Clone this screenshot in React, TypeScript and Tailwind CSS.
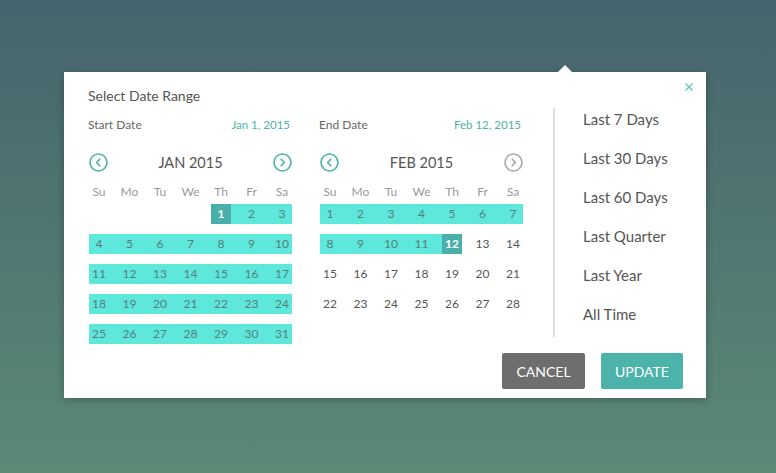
import React from 'react';

type Band = 'none' | 'in' | 'start' | 'end';

const BAND = 'bg-[#5ee8dc]';

function NavArrow({ dir, active }: { dir: 'left' | 'right'; active: boolean }) {
  const color = active ? '#4bb3aa' : '#a8a8a8';
  return (
    <svg width="19" height="19" viewBox="0 0 19 19" fill="none">
      <circle cx="9.5" cy="9.5" r="8.5" stroke={color} strokeWidth="1.6" />
      {dir === 'left' ? (
        <path d="M10.8 6.2 L7.6 9.5 L10.8 12.8" stroke={color} strokeWidth="1.6" strokeLinecap="round" strokeLinejoin="round" />
      ) : (
        <path d="M8.2 6.2 L11.4 9.5 L8.2 12.8" stroke={color} strokeWidth="1.6" strokeLinecap="round" strokeLinejoin="round" />
      )}
    </svg>
  );
}

function Calendar({
  label,
  value,
  month,
  offset,
  days,
  rangeFrom,
  rangeTo,
  edge,
  nextActive,
}: {
  label: string;
  value: string;
  month: string;
  offset: number;
  days: number;
  rangeFrom: number;
  rangeTo: number;
  edge: number;
  nextActive: boolean;
}) {
  const cells: (number | null)[] = [];
  for (let i = 0; i < offset; i++) cells.push(null);
  for (let d = 1; d <= days; d++) cells.push(d);
  while (cells.length % 7) cells.push(null);
  const weeks: (number | null)[][] = [];
  for (let i = 0; i < cells.length; i += 7) weeks.push(cells.slice(i, i + 7));

  const inBand = (d: number | null) => d !== null && d >= rangeFrom && d <= rangeTo;
  const bandOf = (d: number | null): Band => {
    if (!inBand(d)) return 'none';
    if (d === edge) return rangeFrom === edge ? 'start' : 'end';
    return 'in';
  };

  return (
    <div className="w-[203px]">
      <div className="flex items-center justify-between pr-[2px] leading-[14px]">
        <span className="-ml-px text-[12px] text-[#666]">{label}</span>
        <span className="text-[11.5px] text-[#4bb3aa]">{value}</span>
      </div>

      <div className="mt-[21px] flex items-center justify-between">
        <NavArrow dir="left" active />
        <span className="text-[14.5px] leading-[18px] text-[#555]">{month}</span>
        <NavArrow dir="right" active={nextActive} />
      </div>

      <div className="mt-[13px] flex text-[12px] leading-[14px] text-[#9a9a9a]">
        {['Su', 'Mo', 'Tu', 'We', 'Th', 'Fr', 'Sa'].map((w, i) => (
          <React.Fragment key={w}>
            {i > 0 && <div className="flex-1" />}
            <div className="w-5 text-center">{w}</div>
          </React.Fragment>
        ))}
      </div>

      <div className="mt-[5px] flex flex-col gap-[10px]">
        {weeks.map((week, wi) => (
          <div key={wi} className="flex h-5 text-[12px]">
            {week.map((d, i) => {
              const b = bandOf(d);
              const prev = i > 0 ? week[i - 1] : null;
              const gapOn = i > 0 && inBand(prev) && inBand(d);
              return (
                <React.Fragment key={i}>
                  {i > 0 && <div className={`flex-1 ${gapOn ? BAND : ''}`} />}
                  <div
                    className={`flex h-5 w-5 items-center justify-center ${
                      b === 'start' || b === 'end'
                        ? 'bg-[#48b0a8] font-bold text-white'
                        : b === 'in'
                        ? `${BAND} text-[#587d79]`
                        : 'text-[#555]'
                    }`}
                  >
                    {d}
                  </div>
                </React.Fragment>
              );
            })}
          </div>
        ))}
      </div>
    </div>
  );
}

export default function App() {
  const presets = ['Last 7 Days', 'Last 30 Days', 'Last 60 Days', 'Last Quarter', 'Last Year', 'All Time'];

  return (
    <div
      className="h-[473px] w-[776px] bg-[linear-gradient(to_bottom,#46646d,#5b8a77)] pl-16 pt-[72px]"
      style={{ fontFamily: 'Lato, "Open Sans", sans-serif' }}
    >
      <div className="relative flex h-[326px] w-[642px] flex-col bg-white shadow-[0_2px_8px_rgba(0,0,0,0.25)]">
        {/* caret */}
        <div className="absolute -top-[7px] left-[494px] h-0 w-0 border-x-[7px] border-b-[7px] border-x-transparent border-b-white" />
        {/* close */}
        <button className="absolute right-[12px] top-[10px] text-[#4bb3aa]">
          <svg width="10" height="10" viewBox="0 0 10 10">
            <path d="M1.5 1.5 L8.5 8.5 M8.5 1.5 L1.5 8.5" stroke="#5cc6bd" strokeWidth="1.2" />
          </svg>
        </button>

        <div className="flex">
          <div className="pl-6 pt-4">
            <div className="text-[14px] leading-4 text-[#555]">Select Date Range</div>
            <div className="mt-[14px] flex gap-7 pl-px">
              <Calendar
                label="Start Date"
                value="Jan 1, 2015"
                month="JAN 2015"
                offset={4}
                days={31}
                rangeFrom={1}
                rangeTo={31}
                edge={1}
                nextActive
              />
              <Calendar
                label="End Date"
                value="Feb 12, 2015"
                month="FEB 2015"
                offset={0}
                days={28}
                rangeFrom={1}
                rangeTo={12}
                edge={12}
                nextActive={false}
              />
            </div>
          </div>

          <div className="ml-[30px] mt-9 h-[229px] w-[2px] bg-[#dedede]" />

          <div className="mt-[37px] flex flex-col gap-[19px] pl-[28px]">
            {presets.map((p) => (
              <div key={p} className="text-[15px] leading-5 text-[#555]">
                {p}
              </div>
            ))}
          </div>
        </div>

        <div className="mt-[9px] flex justify-end gap-4 pr-[23px]">
          <button className="h-9 w-[83px] rounded-[2px] bg-[#6e6e6e] text-[14px] text-white">CANCEL</button>
          <button className="h-9 w-[82px] rounded-[2px] bg-[#4bb3aa] text-[14px] text-white">UPDATE</button>
        </div>
      </div>
    </div>
  );
}
